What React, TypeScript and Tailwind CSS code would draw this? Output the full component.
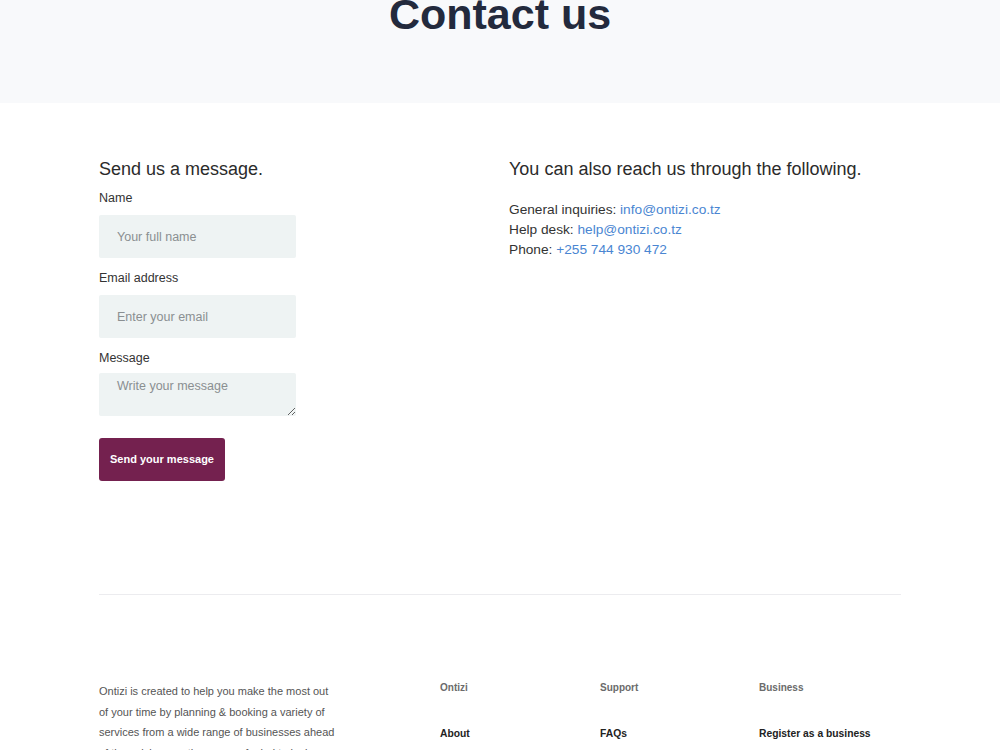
export default function App() {
    const font = { fontFamily: '"Liberation Sans", Arial, sans-serif' };

    return (
        <div className="min-h-screen bg-white text-[#333]" style={font}>
            {/* Hero */}
            <div className="h-[103px] overflow-hidden bg-[#f8f9fb]">
                <h1 className="mt-[-7px] text-center text-[43px] font-bold leading-none text-[#232a3d]">
                    Contact us
                </h1>
            </div>

            <div className="mx-auto w-[802px]">
                {/* Form + info */}
                <div className="grid grid-cols-2 gap-x-[18px] pt-[55px] pb-[113px]">
                    <div>
                        <h2 className="text-[18px] leading-[22px] text-[#2b2b2b]">Send us a message.</h2>
                        <form className="mt-[10px] flex flex-col" onSubmit={(e) => e.preventDefault()}>
                            <label className="text-[12.5px] leading-[16px] text-[#333]">Name</label>
                            <input
                                type="text"
                                placeholder="Your full name"
                                className="mt-[9px] h-[43px] w-[197px] rounded-[2px] bg-[#eef3f3] px-[18px] text-[12.5px] outline-none placeholder:text-[#8a8f91]"
                            />
                            <label className="mt-[12px] text-[12.5px] leading-[16px] text-[#333]">Email address</label>
                            <input
                                type="email"
                                placeholder="Enter your email"
                                className="mt-[9px] h-[43px] w-[197px] rounded-[2px] bg-[#eef3f3] px-[18px] text-[12.5px] outline-none placeholder:text-[#8a8f91]"
                            />
                            <label className="mt-[12px] text-[12.5px] leading-[16px] text-[#333]">Message</label>
                            <textarea
                                placeholder="Write your message"
                                className="mt-[7px] h-[43px] w-[197px] rounded-[2px] bg-[#eef3f3] px-[18px] py-[6px] text-[12.5px] leading-[15px] outline-none placeholder:text-[#8a8f91]"
                            />
                            <button
                                type="submit"
                                className="mt-[22px] h-[43px] w-[126px] rounded-[3px] bg-[#74214f] text-[11px] font-bold text-white"
                            >
                                Send your message
                            </button>
                        </form>
                    </div>

                    <div>
                        <h2 className="text-[18px] leading-[22px] text-[#2b2b2b]">You can also reach us through the following.</h2>
                        <div className="mt-[20px] text-[13.7px] leading-[20px] text-[#333]">
                            <p>General inquiries: <a href="#" className="text-[#4a86d2]">info@ontizi.co.tz</a></p>
                            <p>Help desk: <a href="#" className="text-[#4a86d2]">help@ontizi.co.tz</a></p>
                            <p>Phone: <a href="#" className="text-[#4a86d2]">+255 744 930 472</a></p>
                        </div>
                    </div>
                </div>

                <div className="h-px bg-[#ececef]" />

                {/* Footer */}
                <footer className="grid grid-cols-[341px_160px_159px_1fr] pt-[86px] pb-16">
                    <p className="w-[236px] text-[11px] leading-[20.5px] text-[#555]">
                        Ontizi is created to help you make the most out of your time by planning &amp; booking a variety of services from a wide range of businesses ahead of time giving you the peace of mind to look forward to.
                    </p>
                    {[
                        { title: 'Ontizi', links: ['About', 'Blog', 'Careers'] },
                        { title: 'Support', links: ['FAQs', 'Contact us', 'Terms'] },
                        { title: 'Business', links: ['Register as a business', 'Pricing', 'Login'] },
                    ].map((col) => (
                        <div key={col.title}>
                            <p className="text-[10px] font-bold leading-[14px] text-[#6b6b6b]">{col.title}</p>
                            <ul className="mt-[32px] flex flex-col gap-4">
                                {col.links.map((l) => (
                                    <li key={l} className="text-[10.3px] font-bold leading-[14px] text-[#222]">{l}</li>
                                ))}
                            </ul>
                        </div>
                    ))}
                </footer>
            </div>
        </div>
    );
}
